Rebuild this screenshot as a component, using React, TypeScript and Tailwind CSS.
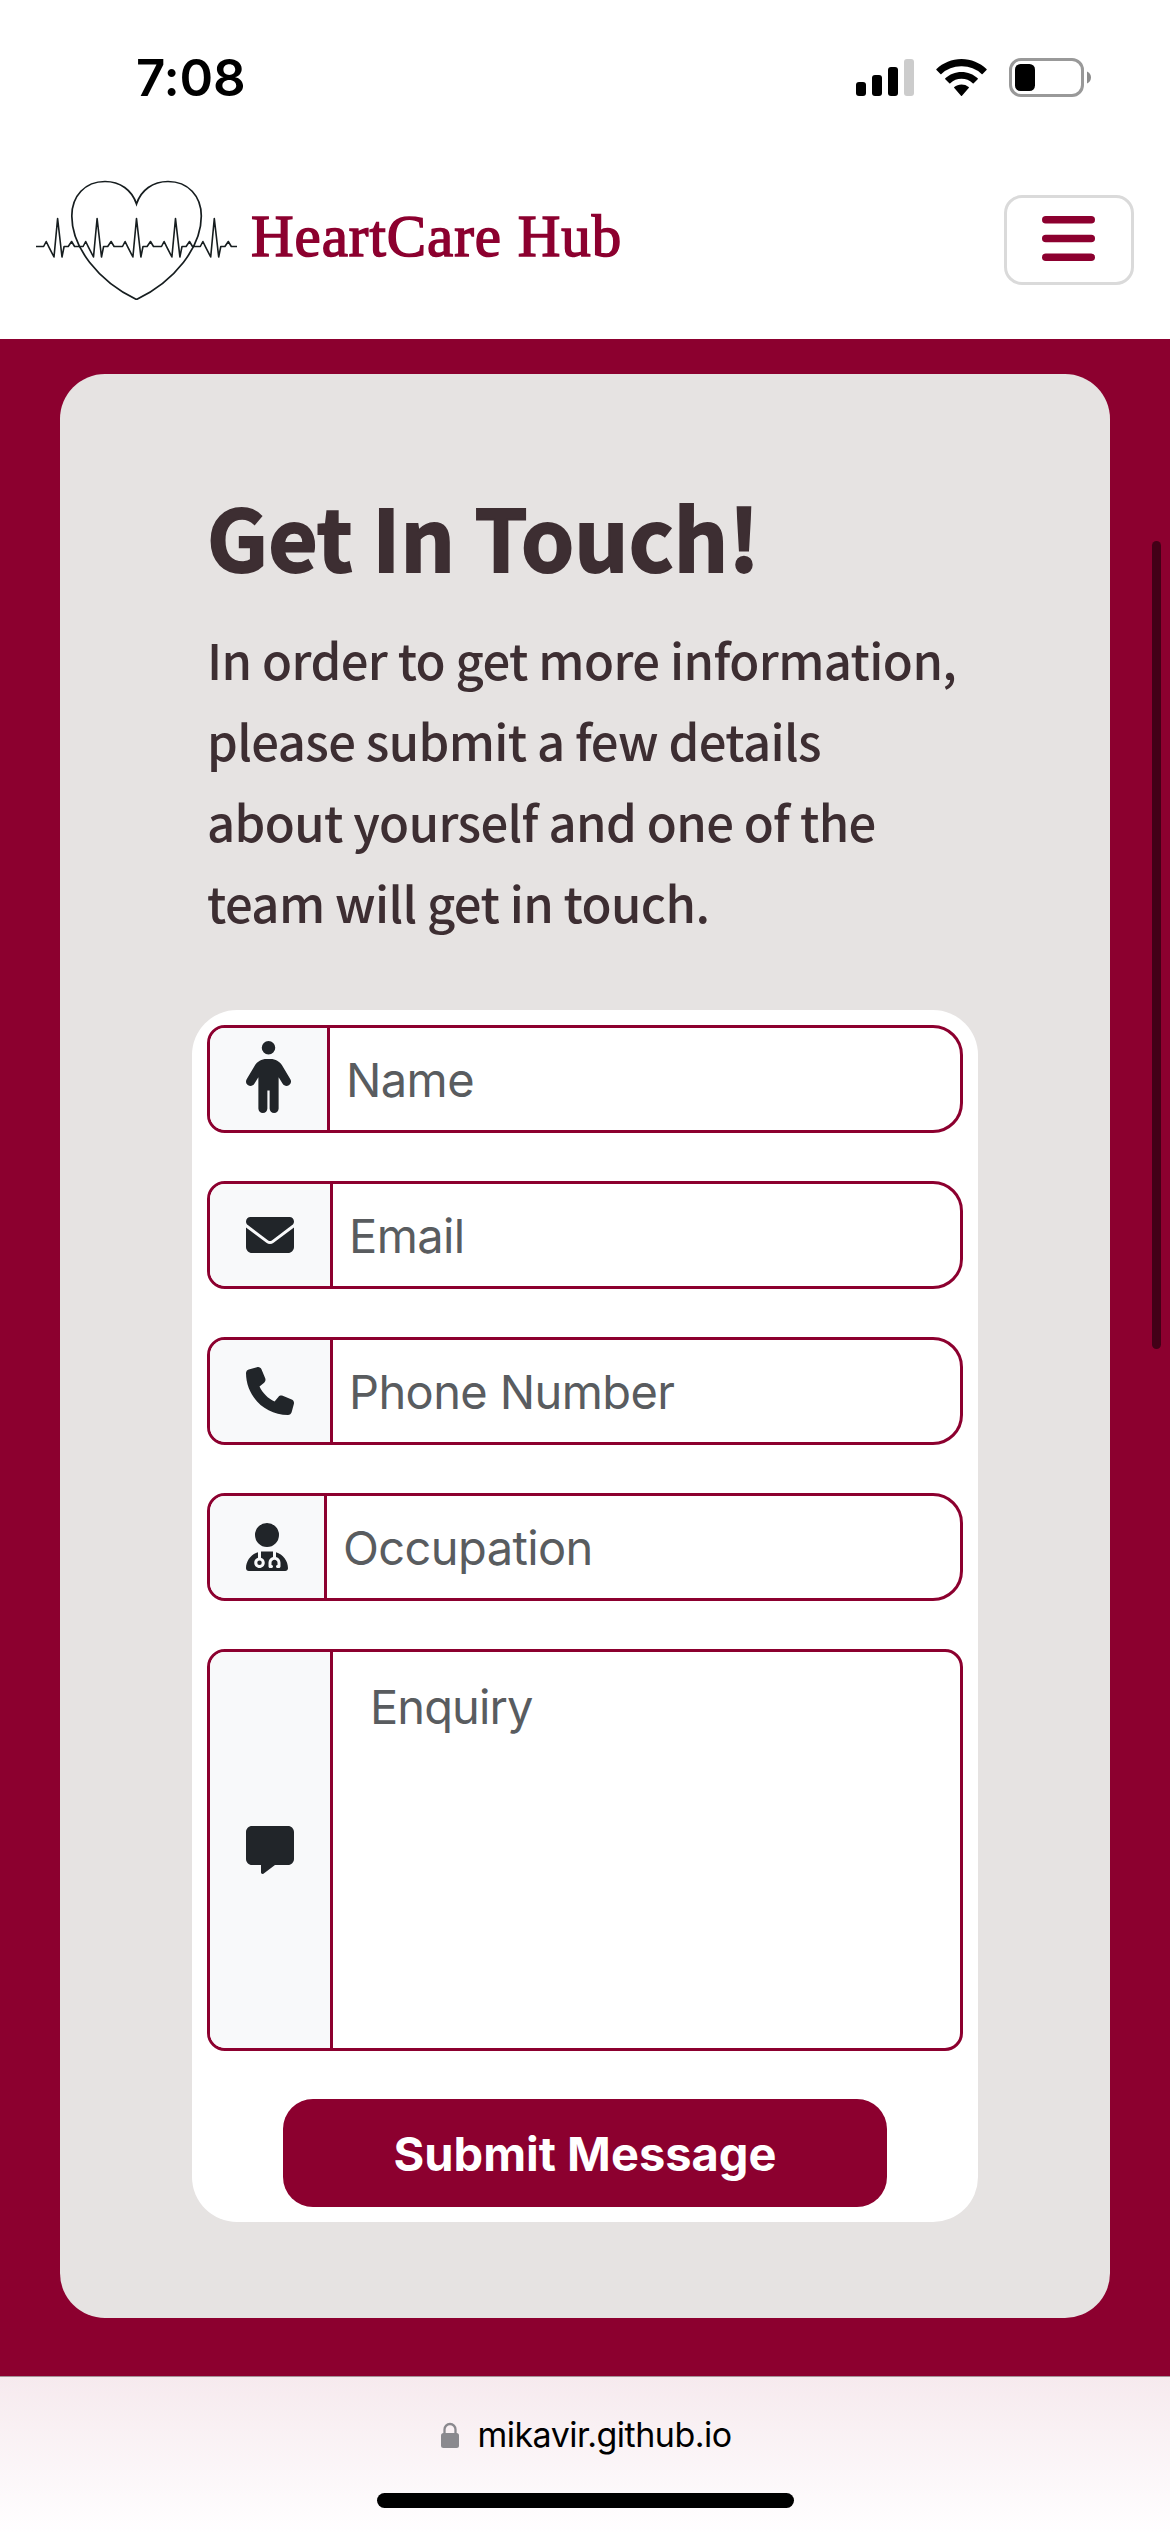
import type { ReactNode } from "react";
import { FaEnvelope, FaMessage, FaPerson, FaPhone, FaUserDoctor } from "react-icons/fa6";

function StatusBar() {
  return (
    <div className="flex h-[144px] items-start justify-between pl-[136px] pr-[79px] pt-[58px]">
      <div className="font-['Inter'] text-[51px] font-semibold leading-[40px] tracking-[-0.2px] text-black">7:08</div>
      <div className="flex">
        <svg width="58" height="39" viewBox="0 0 58 39">
          <rect x="0" y="24" width="10" height="14" rx="3" />
          <rect x="16" y="17" width="10" height="21" rx="3" />
          <rect x="32" y="9" width="10" height="29" rx="3" />
          <rect x="48" y="1" width="10" height="37" rx="3" fill="#cccccc" />
        </svg>
        <svg width="51" height="39" viewBox="0 0 51 39" className="ml-[22px]">
          <path d="M25.5 1C15.800 1 7 4.800 .5 11.100a.7.700 0 0 0 0 1l3.900 3.900c.3.300.7.300 1 0A29 29 0 0 1 25.500 8.300a29 29 0 0 1 20.100 7.700c.3.300.7.300 1 0l3.900-3.900a.7.700 0 0 0 0-1C44 4.800 35.200 1 25.500 1Z" />
          <path d="M25.500 13.900c-6.200 0-11.900 2.400-16.200 6.300a.7.700 0 0 0 0 1l4 4c.3.300.7.300 1 0a16.500 16.500 0 0 1 22.400 0c.3.300.7.300 1 0l4-4a.7.700 0 0 0 0-1c-4.300-3.900-10-6.300-16.200-6.300Z" />
          <path d="M25.500 26.500c-2.700 0-5.200.9-7.200 2.400-.4.300-.4.800 0 1.100l6.700 7.700c.3.300.7.300 1 0l6.700-7.700c.4-.3.400-.8 0-1.100a12 12 0 0 0-7.200-2.400Z" />
        </svg>
        <svg width="82" height="39" viewBox="0 0 82 39" className="ml-[22px]">
          <rect x="1.500" y="1.500" width="72" height="36" rx="10.500" fill="none" stroke="#999999" strokeWidth="3" />
          <rect x="6" y="6" width="20" height="27" rx="5.500" />
          <path d="M78 13.500c2.400 1 4 3.300 4 6s-1.600 5-4 6Z" fill="#8c8c8c" />
        </svg>
      </div>
    </div>
  );
}

function HeartLogo() {
  const beats = [57.6, 97.1, 136.5, 175.5, 214.3];
  const pulse = beats
    .map((x) => {
      const points: [number, number][] = [
        [-14, 246.5], [-11.4, 241.5], [-8.8, 246.8], [-3.6, 257], [0, 218.5],
        [4.4, 257], [6.5, 246.5], [10.6, 246.5], [14, 241.5], [17, 246.5],
      ];
      return points.map(([dx, y]) => `${(x + dx).toFixed(1)},${y}`).join(" ");
    })
    .join(" ");
  return (
    <svg width="201" height="120" viewBox="36 180 201 120" fill="none" stroke="#161d1f">
      <path
        d="M136.500 204C132 190 120 181.500 105 181.500C85 181.500 71.800 196 71.800 216C71.800 247 98 281 136.500 299.500C175 281 201.300 247 201.300 216C201.300 196 188 181.500 168 181.500C153 181.500 141 190 136.500 204Z"
        strokeWidth="1.700"
      />
      <polyline points={`36,246.500 ${pulse} 237,246.500`} strokeWidth="1.600" strokeLinejoin="round" />
    </svg>
  );
}

function Navbar() {
  return (
    <header className="flex h-[195px] items-start justify-between pl-[36px] pr-[36px]">
      <div className="flex pt-[36px]">
        <HeartLogo />
        <div className="ml-[14px] mt-[21px] whitespace-nowrap font-['Liberation_Serif'] text-[59px] leading-[70px] tracking-[0.95px] text-[#8c002f] [-webkit-text-stroke:1.5px_#8c002f]">
          HeartCare Hub
        </div>
      </div>
      <button className="mt-[51px] flex h-[90px] w-[130px] justify-center rounded-[18px] border-[3px] border-[#dadada] pr-px pt-[18px]">
        <svg width="53" height="45" viewBox="0 0 53 45" fill="#8c002f">
          <rect y="0" width="53" height="7.500" rx="3.750" />
          <rect y="18.750" width="53" height="7.500" rx="3.750" />
          <rect y="37.500" width="53" height="7.500" rx="3.750" />
        </svg>
      </button>
    </header>
  );
}

function Field({ icon, label }: { icon: ReactNode; label: string }) {
  return (
    <div className="flex h-[108px] overflow-hidden rounded-l-[18px] rounded-r-[30px] border-[3px] border-[#8c002f] bg-white">
      <div className="flex items-center border-r-[3px] border-[#8c002f] bg-[#f8f9fa] px-[36px] text-[#212529]">{icon}</div>
      <div className="flex items-center pl-[16px] pt-[2px] font-['Inter'] text-[47px] leading-[72px] tracking-[-0.6px] text-[#595c5f]">
        {label}
      </div>
    </div>
  );
}

function ContactForm() {
  return (
    <div className="mx-[132px] flex flex-col gap-[48px] rounded-[45px] bg-white p-[15px]">
      <Field icon={<FaPerson className="mb-[4px] h-[72px] w-[45px]" />} label="Name" />
      <Field icon={<FaEnvelope className="size-[48px]" />} label="Email" />
      <Field icon={<FaPhone className="size-[48px]" />} label="Phone Number" />
      <Field icon={<FaUserDoctor className="h-[48px] w-[42px]" />} label="Occupation" />
      <div className="flex h-[402px] overflow-hidden rounded-[18px] border-[3px] border-[#8c002f]">
        <div className="flex items-center border-r-[3px] border-[#8c002f] bg-[#f8f9fa] px-[36px] text-[#212529]">
          <FaMessage className="size-[48px]" />
        </div>
        <div className="pl-[37px] pt-[19px] font-['Inter'] text-[47px] leading-[72px] tracking-[-0.9px] text-[#595c5f]">
          Enquiry
        </div>
      </div>
      <button className="mx-[76px] h-[108px] rounded-[30px] bg-[#8c002f] pt-px font-['Inter'] text-[47px] font-bold leading-[72px] text-white">
        Submit Message
      </button>
    </div>
  );
}

function BrowserBar() {
  return (
    <footer className="flex h-[156px] flex-col items-center border-t border-[#a59298] bg-gradient-to-b from-[#f6eaee] to-[#fffeff] pt-[35px]">
      <div className="flex h-[46px] items-center pl-[3px]">
        <svg width="18" height="26" viewBox="0 0 18 26" className="mr-[18px]">
          <path d="M3.500 12V7.500a5.500 5.500 0 0 1 11 0V12" fill="none" stroke="#8a898e" strokeWidth="2.300" />
          <rect y="11" width="18" height="15" rx="2.500" fill="#8a898e" />
        </svg>
        <span className="font-['Inter'] text-[34px] leading-[46px] tracking-[-0.5px] text-black">mikavir.github.io</span>
      </div>
      <div className="mt-[35px] h-[15px] w-[417px] rounded-full bg-black" />
    </footer>
  );
}

export default function App() {
  return (
    <div className="relative flex h-[2532px] w-[1170px] flex-col overflow-hidden bg-white">
      <StatusBar />
      <Navbar />
      <main className="h-[2037px] bg-[#8c002f] px-[60px] pt-[35px]">
        <section className="h-[1944px] rounded-[45px] bg-[#e6e3e2] pt-[107px] text-[#3d2e32]">
          <h1 className="ml-[147px] whitespace-nowrap font-['Noto_Sans_CJK_SC'] text-[85px] font-bold leading-[108px] tracking-[0.2px] [-webkit-text-stroke:2px_#3d2e32]">
            Get In Touch!
          </h1>
          <p className="ml-[147px] mt-[29px] whitespace-nowrap font-['Noto_Sans_CJK_SC'] text-[49px] font-medium leading-[81px] tracking-[-0.6px]">
            In order to get more information,
            <br />
            please submit a few details
            <br />
            about yourself and one of the
            <br />
            team will get in touch.
          </p>
          <div className="mt-[68px]">
            <ContactForm />
          </div>
        </section>
      </main>
      <BrowserBar />
      <div className="absolute right-[9px] top-[541px] h-[808px] w-[9px] rounded-full bg-[#430017]" />
    </div>
  );
}
